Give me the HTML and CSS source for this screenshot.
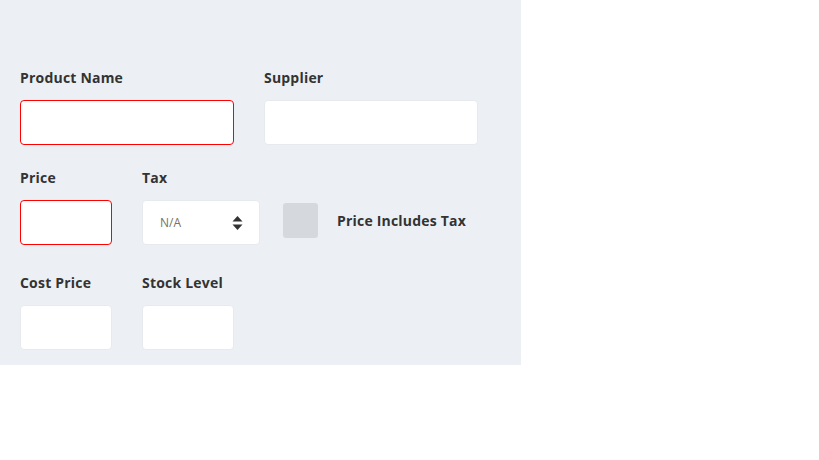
FILE: index.html
```html
<!DOCTYPE html>
<html>
<head>
<meta charset="utf-8">
<link rel="stylesheet" href="styles.css">
</head>
<body>
<div class="panel">
  <div class="row row-1">
    <div class="field">
      <label class="label">Product Name</label>
      <div class="input input-wide input-error"></div>
    </div>
    <div class="field">
      <label class="label">Supplier</label>
      <div class="input input-wide"></div>
    </div>
  </div>
  <div class="row row-2">
    <div class="field">
      <label class="label">Price</label>
      <div class="input input-small input-error"></div>
    </div>
    <div class="field">
      <label class="label">Tax</label>
      <div class="input select">
        <span class="select-value">N/A</span>
        <svg class="select-arrows" width="11" height="16" viewBox="0 0 11 16"><path d="M5.5 1 L10.5 6.5 H0.5 Z M5.5 15 L10.5 9.5 H0.5 Z" fill="#333"/></svg>
      </div>
    </div>
    <div class="check-field">
      <div class="checkbox"></div>
      <span class="check-label">Price Includes Tax</span>
    </div>
  </div>
  <div class="row row-3">
    <div class="field">
      <label class="label">Cost Price</label>
      <div class="input input-small"></div>
    </div>
    <div class="field">
      <label class="label">Stock Level</label>
      <div class="input input-small"></div>
    </div>
  </div>
</div>
</body>
</html>
```
FILE: styles.css
```css
html, body {
  margin: 0;
  padding: 0;
  background: #ffffff;
}
body {
  font-family: "Open Sans", "Liberation Sans", sans-serif;
  color: #333;
}
.panel {
  box-sizing: border-box;
  width: 521px;
  height: 365px;
  background: #ecf0f4;
  padding: 68px 20px 0 20px;
}
.row {
  display: flex;
  gap: 30px;
  align-items: flex-end;
}
.row-1 { margin-bottom: 23px; }
.row-2 { margin-bottom: 28px; }
.field {
  display: flex;
  flex-direction: column;
}
.label {
  display: block;
  height: 19px;
  line-height: 19px;
  font-size: 14px;
  font-weight: 700;
  letter-spacing: 0.2px;
  color: #333;
  margin-bottom: 13px;
}
.input {
  box-sizing: border-box;
  height: 45px;
  background: #fff;
  border: 1px solid #e6eaee;
  border-radius: 4px;
}
.input-wide { width: 214px; }
.input-small { width: 92px; }
.input-error { border-color: #ff0000; }
.select {
  width: 118px;
  display: flex;
  align-items: center;
  justify-content: space-between;
  padding: 0 16px 0 17px;
}
.select-value {
  font-size: 12px;
  color: #7a7068;
}
.select-arrows { display: block; }
.check-field {
  display: flex;
  align-items: center;
  height: 45px;
  margin-left: -7px;
  gap: 19px;
}
.checkbox {
  width: 35px;
  height: 35px;
  border-radius: 3px;
  background: #d5d9dd;
  margin-top: -4px;
}
.check-label {
  font-size: 14px;
  font-weight: 700;
  letter-spacing: 0.2px;
  color: #333;
  margin-top: -4px;
}
```
